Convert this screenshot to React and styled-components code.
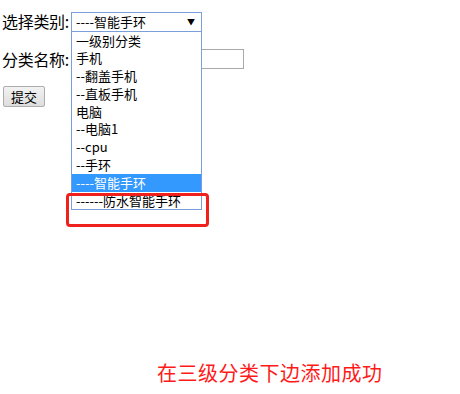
import React from 'react'
import styled, { createGlobalStyle } from 'styled-components'

const Global = createGlobalStyle`
  html, body {
    margin: 0;
    padding: 0;
    background: #fff;
  }
  body {
    font-family: "Noto Sans CJK SC", "Liberation Sans", sans-serif;
    color: #000;
  }
`

const Page = styled.div`
  position: relative;
  width: 460px;
  height: 394px;
  padding: 11px 0 0 2px;
  box-sizing: border-box;
  display: flex;
  flex-direction: column;
  overflow: hidden;
`

const Row = styled.div`
  display: flex;
  align-items: center;
  height: 20px;
  margin-top: ${p => p.gap || 0}px;
`

const Label = styled.span`
  font-size: 16px;
  line-height: 20px;
  width: 69px;
  white-space: nowrap;
  letter-spacing: -0.3px;
`

const SelectWrap = styled.div`
  position: relative;
  width: 131px;
  height: 19px;
  z-index: 2;
`

const SelectBox = styled.div`
  height: 19px;
  box-sizing: border-box;
  border: 1px solid #7a9fd9;
  border-bottom: none;
  display: flex;
  align-items: center;
  justify-content: space-between;
  padding: 0 6px 0 4px;
  font-size: 13px;
  background: #fff;
`

const Arrow = styled.span`
  font-size: 8px;
  line-height: 1;
`

const List = styled.div`
  position: absolute;
  left: 0;
  top: 19px;
  width: 131px;
  box-sizing: border-box;
  border: 1px solid #7a9fd9;
  background: #fff;
`

const Option = styled.div`
  height: 17.8px;
  line-height: 17.8px;
  padding-left: 4px;
  font-size: 13px;
  white-space: nowrap;
  background: ${p => (p.active ? '#3399ff' : '#fff')};
  color: ${p => (p.active ? '#fff' : '#000')};
`

const Highlight = styled.div`
  position: absolute;
  left: -5px;
  top: 181px;
  width: 143px;
  height: 34px;
  box-sizing: border-box;
  border: 3px solid #f0201c;
  border-radius: 4px;
`

const Input = styled.div`
  width: 173px;
  height: 20px;
  box-sizing: border-box;
  border: 1px solid #a9a9a9;
  background: #fff;
`

const Button = styled.button`
  margin: 0 0 0 1px;
  width: 42px;
  height: 21px;
  padding: 0;
  font-family: "Noto Sans CJK SC", sans-serif;
  font-size: 13px;
  line-height: 17px;
  color: #000;
  border: 1px solid #adadad;
  border-radius: 2px;
  background: linear-gradient(#f2f2f2, #dedede);
`

const Message = styled.div`
  margin-top: auto;
  margin-bottom: 9px;
  padding-left: 155px;
  font-size: 20px;
  line-height: 24px;
  color: #ff1a1a;
  letter-spacing: 0.5px;
`

const options = [
  '一级别分类',
  '手机',
  '--翻盖手机',
  '--直板手机',
  '电脑',
  '--电脑1',
  '--cpu',
  '--手环',
  '----智能手环',
  '------防水智能手环',
]

export default function App() {
  return (
    <>
      <Global />
      <Page>
        <Row>
          <Label>选择类别:</Label>
          <SelectWrap>
            <SelectBox>
              <span>----智能手环</span>
              <Arrow>▼</Arrow>
            </SelectBox>
            <List>
              {options.map((o, i) => (
                <Option key={i} active={i === 8}>{o}</Option>
              ))}
            </List>
            <Highlight />
          </SelectWrap>
        </Row>
        <Row gap={18}>
          <Label>分类名称:</Label>
          <Input />
        </Row>
        <Row gap={17}>
          <Button>提交</Button>
        </Row>
        <Message>在三级分类下边添加成功</Message>
      </Page>
    </>
  )
}
